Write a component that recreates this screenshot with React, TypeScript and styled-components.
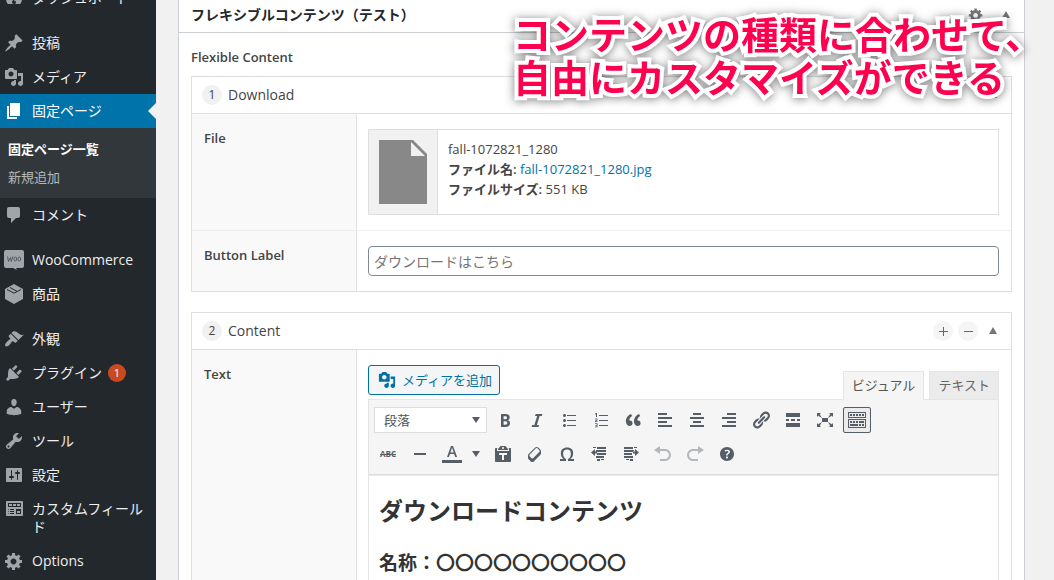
import React from "react";
import styled, { createGlobalStyle, css } from "styled-components";

const GlobalStyle = createGlobalStyle`
  *, *::before, *::after { box-sizing: border-box; }
  body {
    margin: 0;
    background: #f1f1f1;
    color: #444;
    font-family: "Open Sans", "Noto Sans CJK JP", sans-serif;
    font-size: 13px;
    line-height: 20px;
  }
  button, input, select { font: inherit; color: inherit; }
  a { color: #0073aa; text-decoration: none; }
  h1, h2, h3, ul, p { margin: 0; padding: 0; }
  ul { list-style: none; }
  strong { font-weight: 600; }
`;

/* ---------- icons ---------- */

const paths: Record<string, string> = {
  dashboard:
    "M3.760 16h12.480A7.980 7.980 0 0 0 18 11a8 8 0 1 0-16 0c0 1.900.66 3.640 1.760 5zM10 4c.55 0 1 .45 1 1s-.45 1-1 1-1-.45-1-1 .45-1 1-1zM9.500 9l.6 3.600c1 0 1.900.9 1.900 1.900s-.9 1.500-2 1.500-2-.7-2-1.700.6-1.500 1-1.700z",
  pin: "M10.44 3.02l1.82-1.82 6.36 6.35-1.83 1.82c-1.05-.68-2.48-.57-3.41.36l-.75.75c-.92.93-1.04 2.35-.35 3.41l-1.83 1.82-2.41-2.41-2.8 2.79c-.42.42-3.38 2.71-3.8 2.29s1.86-3.39 2.28-3.81l2.79-2.79L4.1 9.36l1.83-1.82c1.05.69 2.48.57 3.4-.36l.75-.75c.93-.92 1.05-2.35.36-3.41z",
  media:
    "M13 11V4c0-.55-.45-1-1-1h-1.67L9 1H5L3.67 3H2c-.55 0-1 .45-1 1v7c0 .55.45 1 1 1h10c.55 0 1-.45 1-1zM7 4.5c1.38 0 2.5 1.12 2.5 2.5S8.38 9.5 7 9.5 4.5 8.38 4.5 7 5.62 4.5 7 4.5zM14 6h5v10.5c0 1.38-1.12 2.5-2.5 2.5S14 17.88 14 16.5s1.12-2.5 2.5-2.5c.17 0 .34.02.5.05V9h-3V6zm-4 8.05V13h2v3.5c0 1.38-1.12 2.5-2.5 2.5S7 17.88 7 16.5 8.12 14 9.5 14c.17 0 .34.02.5.05z",
  page: "M6 15V2h10v13H6zm-1 1h8v2H3V5h2v11z",
  comment:
    "M5 2h9c1.1 0 2 .9 2 2v7c0 1.1-.9 2-2 2h-2l-5 5v-5H5c-1.1 0-2-.9-2-2V4c0-1.1.9-2 2-2z",
  brush:
    "M14.48 11.06L7.41 3.99l1.5-1.5c.5-.56 2.3-.47 3.51.32 1.21.8 1.43 1.28 2.91 2.1 1.18.64 2.45 1.26 4.45.85zm-.71.71L6.7 4.7 4.93 6.47c-.39.39-.39 1.02 0 1.41l1.06 1.06c.39.39.39 1.03 0 1.42-.6.6-1.43 1.11-2.21 1.69-.35.26-.7.53-1.01.84C1.43 14.23.4 16.08 1.4 17.07c.99 1 2.84-.03 4.18-1.36.31-.31.58-.66.85-1.02.57-.78 1.08-1.61 1.69-2.21.39-.39 1.02-.39 1.41 0l1.06 1.06c.39.39 1.02.39 1.41 0z",
  plug: "M13.11 4.36L9.87 7.6 8 5.73l3.24-3.24c.35-.34 1.05-.2 1.56.32.52.51.66 1.21.31 1.55zm-8 1.77l.91-1.12 9.01 9.01-1.19.84c-.71.71-2.63 1.16-3.82 1.16H6.14L4.9 17.26c-.59.59-1.54.59-2.12 0-.59-.58-.59-1.53 0-2.12l1.24-1.24v-3.88c0-1.13.4-3.19 1.09-3.89zm7.26 3.97l3.24-3.24c.34-.35 1.04-.21 1.55.31.52.51.66 1.21.31 1.55l-3.24 3.25z",
  user: "M10 9.25c-2.27 0-2.73-3.44-2.73-3.44C7 4.02 7.82 2 9.97 2c2.16 0 2.98 2.02 2.71 3.81 0 0-.41 3.44-2.68 3.44zm0 2.57L12.72 10c2.39 0 4.52 2.33 4.52 4.53v2.49s-3.65 1.13-7.24 1.13c-3.65 0-7.24-1.13-7.24-1.13v-2.49c0-2.25 1.94-4.48 4.47-4.48z",
  wrench:
    "M16.68 9.77c-1.34 1.34-3.3 1.67-4.95.99l-5.41 6.52c-.99.99-2.59.99-3.58 0s-.99-2.59 0-3.57l6.52-5.42c-.68-1.65-.35-3.61.99-4.95 1.28-1.28 3.12-1.62 4.72-1.06l-2.89 2.89 2.82 2.82 2.86-2.87c.53 1.58.18 3.39-1.08 4.65zM3.81 16.21c.4.39 1.04.39 1.43 0 .4-.4.4-1.04 0-1.43-.39-.4-1.03-.4-1.43 0-.39.39-.39 1.03 0 1.43z",
  sliders:
    "M18 16V4c0-.55-.45-1-1-1H3c-.55 0-1 .45-1 1v12c0 .55.45 1 1 1h14c.55 0 1-.45 1-1zM8 11h1c.55 0 1 .45 1 1s-.45 1-1 1H8v1.5c0 .28-.22.5-.5.5s-.5-.22-.5-.5V13H6c-.55 0-1-.45-1-1s.45-1 1-1h1V5.5c0-.28.22-.5.5-.5s.5.22.5.5V11zm5-2h-1c-.55 0-1-.45-1-1s.45-1 1-1h1V5.5c0-.28.22-.5.5-.5s.5.22.5.5V7h1c.55 0 1 .45 1 1s-.45 1-1 1h-1v5.5c0 .28-.22.5-.5.5s-.5-.22-.5-.5V9z",
  fields:
    "M19 16V3c0-.55-.45-1-1-1H3c-.55 0-1 .45-1 1v13c0 .55.45 1 1 1h15c.55 0 1-.45 1-1zM4 4h13v4H4V4zm1 1v2h3V5H5zm4 0v2h3V5H9zm4 0v2h3V5h-3zm-8.5 5c.28 0 .5.22.5.5s-.22.5-.5.5-.5-.22-.5-.5.22-.5.5-.5zM6 10h4v1H6v-1zm6 0h5v5h-5v-5zm-7.5 2c.28 0 .5.22.5.5s-.22.5-.5.5-.5-.22-.5-.5.22-.5.5-.5zM6 12h4v1H6v-1zm7 0v2h3v-2h-3zm-8.5 2c.28 0 .5.22.5.5s-.22.5-.5.5-.5-.22-.5-.5.22-.5.5-.5zM6 14h4v1H6v-1z",
  cog: "M18 12h-2.18c-.17.7-.44 1.35-.81 1.93l1.54 1.54-2.1 2.1-1.54-1.54c-.58.36-1.23.63-1.91.79V19H8v-2.18c-.68-.16-1.33-.43-1.91-.79l-1.54 1.54-2.12-2.12 1.54-1.54c-.36-.58-.63-1.23-.79-1.91H1V9.03h2.17c.16-.7.44-1.35.8-1.94L2.43 5.55l2.1-2.1 1.54 1.54c.58-.37 1.24-.64 1.93-.81V2h3v2.18c.68.16 1.33.43 1.91.79l1.54-1.54 2.12 2.12-1.54 1.54c.36.59.64 1.24.8 1.94H18V12zm-8.5 1.5c1.66 0 3-1.34 3-3s-1.34-3-3-3-3 1.34-3 3 1.34 3 3 3z",
  up: "M6 13l4-7 4 7z",
  down: "M6 7h8l-4 6z",
  bold: "M6 4v13h4.54c1.37 0 2.46-.33 3.26-1 .8-.66 1.2-1.58 1.2-2.77 0-.84-.17-1.51-.51-2.01s-.9-.85-1.67-1.03v-.09c.57-.1 1.02-.4 1.36-.9s.51-1.13.51-1.91c0-1.14-.39-1.98-1.17-2.5C12.75 4.26 11.5 4 9.78 4H6zm2.57 5.15V6.26h1.36c.73 0 1.27.11 1.61.32.34.22.51.58.51 1.07 0 .54-.16.92-.47 1.15s-.82.35-1.51.35h-1.5zm0 2.19h1.6c1.44 0 2.16.53 2.16 1.61 0 .6-.17 1.05-.51 1.34s-.86.43-1.57.43H8.57v-3.38z",
  italic: "M14.78 6h-2.13l-2.8 9h2.12l-.62 2H4.6l.62-2h2.14l2.8-9H8.03l.62-2h6.75z",
  ul: "M5.500 7C4.670 7 4 6.330 4 5.500 4 4.680 4.670 4 5.500 4 6.320 4 7 4.680 7 5.500 7 6.330 6.320 7 5.500 7zM8 5h9v1H8V5zm-2.500 7c-.83 0-1.500-.67-1.500-1.500C4 9.680 4.670 9 5.500 9c.82 0 1.500.68 1.500 1.500 0 .83-.68 1.500-1.500 1.500zM8 10h9v1H8v-1zm-2.500 7c-.83 0-1.500-.67-1.500-1.500 0-.82.67-1.500 1.500-1.500.82 0 1.500.68 1.500 1.500 0 .83-.68 1.500-1.500 1.500zM8 15h9v1H8v-1z",
  ol: "M8 5h9v1H8zM8 10h9v1H8zM8 15h9v1H8zM5 3h1v4H5V4.200l-1 .4v-.9zM4 8.500h2.400v2L5 11.200h1.500v.8H4v-1.200l1.600-.8v-.7H4zM4 13.300h2.500v4H4v-.8h1.700v-.8H4.400v-.8h1.300v-.8H4z",
  quote:
    "M9.49 13.22c0-.74-.2-1.38-.61-1.9-.62-.78-1.83-.88-2.53-.72-.29-1.65 1.11-3.75 2.92-4.65L7.88 4c-2.73 1.3-5.42 4.28-4.96 8.05C3.21 14.43 4.59 16 6.54 16c.85 0 1.56-.25 2.12-.75s.83-1.18.83-2.03zm8.05 0c0-.74-.2-1.38-.61-1.9-.63-.78-1.83-.88-2.53-.72-.29-1.65 1.11-3.75 2.92-4.65L15.93 4c-2.73 1.3-5.41 4.28-4.95 8.05.29 2.38 1.66 3.95 3.61 3.95.85 0 1.56-.25 2.12-.75s.83-1.18.83-2.03z",
  alignLeft: "M12 5V3H3v2h9zm5 4V7H3v2h14zm-5 4v-2H3v2h9zm5 4v-2H3v2h14z",
  alignCenter: "M14 5V3H6v2h8zm3 4V7H3v2h14zm-3 4v-2H6v2h8zm3 4v-2H3v2h14z",
  alignRight: "M17 5V3H8v2h9zm0 4V7H3v2h14zm0 4v-2H8v2h9zm0 4v-2H3v2h14z",
  link: "M17.74 2.76c1.68 1.69 1.68 4.41 0 6.1l-1.53 1.52c-1.12 1.12-2.7 1.47-4.14 1.09l2.62-2.61.76-.77.76-.76c.84-.84.84-2.2 0-3.04-.84-.85-2.2-.85-3.04 0l-.77.76-3.38 3.38c-.37-1.44-.02-3.02 1.1-4.14l1.52-1.53c1.69-1.68 4.42-1.68 6.1 0zM8.59 13.43l5.34-5.34c.42-.42.42-1.1 0-1.52-.44-.43-1.13-.39-1.53 0l-5.33 5.34c-.42.42-.42 1.1 0 1.52.44.43 1.13.39 1.52 0zm-.76 2.29l4.14-4.15c.38 1.44.03 3.02-1.09 4.14l-1.52 1.53c-1.69 1.68-4.41 1.68-6.1 0-1.68-1.68-1.68-4.42 0-6.1l1.53-1.52c1.12-1.12 2.7-1.47 4.14-1.1l-4.14 4.15c-.85.84-.85 2.2 0 3.05.84.84 2.2.84 3.04 0z",
  more: "M17 7V3H3v4h14zM6 11V9H3v2h3zm6 0V9H8v2h4zm5 0V9h-3v2h3zm0 6v-4H3v4h14z",
  expand:
    "M7 8h6v4H7zm-5 5v4h4l-1.200-1.200L7 12l-3.800 2.200M14 17h4v-4l-1.200 1.200L13 12l2.200 3.800M14 3l1.300 1.300L13 8l3.800-2.200L18 7V3M6 3H2v4l1.200-1.200L7 8 4.700 4.300",
  keyboard:
    "M19 2v6H1V2h18zm-1 5V3H2v4h16zM5 4v2H3V4h2zm3 0v2H6V4h2zm3 0v2H9V4h2zm3 0v2h-2V4h2zm3 0v2h-2V4h2zm2 5v9H1V9h18zm-1 8v-7H2v7h16zM5 11v2H3v-2h2zm3 0v2H6v-2h2zm3 0v2H9v-2h2zm6 0v2h-5v-2h5zm-6 3v2H3v-2h8zm3 0v2h-2v-2h2zm3 0v2h-2v-2h2z",
  rule: "M4 9h12v2H4z",
  paste:
    "M12.38 2L15 5v1H5V5l2.64-3h4.74zM10 5c.55 0 1-.44 1-1 0-.55-.45-1-1-1s-1 .45-1 1c0 .56.45 1 1 1zm5.45-1H17c.55 0 1 .45 1 1v12c0 .56-.45 1-1 1H3c-.55 0-1-.44-1-1V5c0-.55.45-1 1-1h1.55L4 4.63V7h12V4.63zM14 11V9H6v2h3v5h2v-5h3z",
  eraser:
    "M14.29 4.59l1.1 1.11c.41.4.61.94.61 1.47v2.12c0 .53-.2 1.07-.61 1.47l-6.63 6.63c-.4.41-.94.61-1.47.61s-1.07-.2-1.47-.61l-1.11-1.1-1.1-1.11c-.41-.4-.61-.94-.61-1.47v-2.12c0-.54.2-1.07.61-1.48l6.63-6.62c.4-.41.94-.61 1.47-.61s1.06.2 1.47.61zm-6.21 9.7l6.42-6.42c.39-.39.39-1.03 0-1.43L12.36 4.3c-.19-.19-.45-.29-.72-.29s-.52.1-.71.29l-6.42 6.42c-.39.4-.39 1.04 0 1.43l2.14 2.14c.38.38 1.04.38 1.43 0z",
  omega:
    "M10 5.4c1.27 0 2.24.36 2.91 1.08.66.71 1 1.76 1 3.13 0 1.28-.23 2.37-.69 3.27-.47.89-1.27 1.52-2.22 2.12v2h6v-2h-3.69c.92-.64 1.62-1.34 2.12-2.34.49-1.01.74-2.13.74-3.35 0-1.78-.55-3.19-1.65-4.22S11.92 3.54 10 3.54s-3.43.53-4.52 1.57c-1.1 1.04-1.65 2.44-1.65 4.2 0 1.21.24 2.31.73 3.33.48 1.01 1.19 1.71 2.1 2.36H3v2h6v-2c-.98-.64-1.8-1.28-2.24-2.17-.45-.89-.67-1.96-.67-3.22 0-1.37.33-2.41 1-3.13C7.750 5.760 8.720 5.400 10 5.400z",
  outdent:
    "M4 3h3v1H4zM8 3h9v2H8zM7 6h10v2H7zM8 9h9v2H8zM7 12h8v2H7zM8 15h3v2H8zM12 15h3v1h-3zM2 8.500L6 5v2.500h2v2H6V12z",
  indent:
    "M3 3h9v2H3zM13 3h3v1h-3zM3 6h10v2H3zM3 9h8v2H3zM3 12h9v2H3zM5 15h3v1H5zM9 15h3v2H9zM18 8.500L14 5v2.500h-2v2h2V12z",
  undo: "M12 5H7V2L1 6l6 4V7h5c2.200 0 4 1.800 4 4s-1.800 4-4 4H7v2h5c3.300 0 6-2.700 6-6s-2.700-6-6-6z",
  redo: "M8 5h5V2l6 4-6 4V7H8c-2.200 0-4 1.800-4 4s1.800 4 4 4h5v2H8c-3.300 0-6-2.700-6-6s2.700-6 6-6z",
  help: "M17 10c0-3.87-3.14-7-7-7-3.87 0-7 3.13-7 7s3.13 7 7 7c3.86 0 7-3.13 7-7zm-6.3 1.48H9.14v-.43c0-.38.08-.7.24-.98s.46-.57.88-.89c.41-.29.68-.53.81-.71.14-.18.2-.39.2-.62 0-.25-.09-.44-.28-.58-.19-.13-.45-.19-.79-.19-.58 0-1.25.19-2 .57l-.64-1.28c.87-.49 1.8-.74 2.77-.74.81 0 1.45.2 1.92.58.48.39.71.91.71 1.55 0 .43-.09.8-.29 1.11-.19.32-.57.67-1.11 1.06-.38.28-.61.49-.71.63-.1.15-.15.34-.15.57v.35zm-1.47 2.74c-.18-.17-.27-.42-.27-.73 0-.33.08-.58.26-.75s.43-.25.77-.25c.32 0 .57.09.75.26s.27.42.27.74c0 .3-.09.55-.27.72-.18.18-.43.27-.75.27-.33 0-.58-.09-.76-.26z",
};

const Svg = styled.svg`
  display: block;
  flex: none;
  fill: currentColor;
`;

function Icon({ name, size = 20 }: { name: string; size?: number }) {
  return (
    <Svg width={size} height={size} viewBox="0 0 20 20" aria-hidden="true">
      {name === "woo" ? (
        <>
          <path d="M2 0h16a2 2 0 0 1 2 2v14a2 2 0 0 1-2 2h-6l1 2-4-2H2a2 2 0 0 1-2-2V2a2 2 0 0 1 2-2z" />
          <path
            d="M3.500 6.500l1 5 2-4 .8 4 1.500-5"
            fill="none"
            stroke="#555b61"
            strokeWidth="1"
            strokeLinejoin="round"
          />
          <ellipse cx="11.300" cy="9" rx="1.400" ry="2" fill="none" stroke="#555b61" />
          <ellipse cx="15.300" cy="9" rx="1.400" ry="2" fill="none" stroke="#555b61" />
        </>
      ) : name === "box" ? (
        <>
          <path d="M10 0l9 5v10l-9 5-9-5V5z" />
          <path
            d="M3 5.500l7 3.700L17 5.500M6 3.500l7 3.900"
            fill="none"
            stroke="#23282d"
            strokeWidth="1"
          />
        </>
      ) : name === "color" ? (
        <>
          <path d="M13.230 13h1.900L11 2H9L5 13h1.880l1.070-3h4.180zm-1.530-4.540H8.510L10 3.600z" />
          <path d="M0 16h20v3H0z" />
        </>
      ) : (
        <path d={paths[name]} fillRule={name === "dashboard" ? "evenodd" : undefined} />
      )}
    </Svg>
  );
}

/* ---------- page frame ---------- */

const Shell = styled.div`
  display: flex;
  height: 100vh;
  overflow: hidden;
  position: relative;
`;

const Sidebar = styled.nav`
  flex: none;
  width: 156px;
  background: #23282d;
  overflow: hidden;
`;

const Menu = styled.ul`
  margin-top: -19px;
`;

const Separator = styled.li`
  height: 11px;
`;

const MenuLink = styled.a<{ $active?: boolean }>`
  display: flex;
  position: relative;
  gap: 8px;
  padding: 8px 8px 8px 4px;
  font-size: 14px;
  line-height: 18px;
  color: #eee;
  svg { margin: -1px 0; color: #a0a5aa; }
  ${(p) =>
    p.$active &&
    css`
      background: #0073aa;
      color: #fff;
      svg { color: #fff; }
      &::after {
        content: "";
        position: absolute;
        right: 0;
        top: 9px;
        border: 8px solid transparent;
        border-right-color: #f1f1f1;
        border-left-width: 0;
      }
    `}
`;

const MenuText = styled.span`
  display: flex;
  align-items: center;
  gap: 6px;
`;

const Count = styled.span`
  width: 18px;
  height: 18px;
  border-radius: 9px;
  background: #ca4a1f;
  color: #fff;
  font-size: 11px;
  text-align: center;
`;

const Submenu = styled.ul`
  padding: 7px 0;
  background: #32373c;
`;

const SubLink = styled.a<{ $current?: boolean }>`
  display: block;
  padding: 5px 8px;
  line-height: 18px;
  color: ${(p) => (p.$current ? "#fff" : "#b4b9be")};
  font-weight: ${(p) => (p.$current ? 700 : 400)};
`;

const Main = styled.main`
  flex: 1;
  min-width: 0;
  padding: 0 29px 0 22px;
`;

const Postbox = styled.section`
  min-height: 100%;
  background: #fff;
  border: solid #ccd0d4;
  border-width: 0 1px;
`;

const PostboxHeader = styled.header`
  display: flex;
  align-items: center;
  justify-content: space-between;
  height: 33px;
  padding: 0 8px 2px 12px;
  border-bottom: 1px solid #ccd0d4;
`;

const PostboxTitle = styled.h1`
  font-size: 14px;
  font-weight: 600;
  color: #23282d;
`;

const HeaderActions = styled.div`
  display: flex;
  align-items: center;
  gap: 12px;
`;

const PlainButton = styled.button`
  display: flex;
  padding: 0;
  border: 0;
  background: none;
  color: #72777c;
`;

const FieldGroup = styled.div`
  padding: 14px 12px;
`;

const GroupLabel = styled.h2`
  margin-bottom: 9px;
  font-size: 13px;
  line-height: 20px;
  font-weight: 600;
`;

const Layout = styled.section`
  margin-bottom: 20px;
  border: 1px solid #dfdfdf;
`;

const LayoutHeader = styled.header`
  display: flex;
  align-items: center;
  gap: 5px;
  height: 37px;
  padding: 0 8px 0 10px;
  border-bottom: 1px solid #dfdfdf;
`;

const Order = styled.span`
  width: 20px;
  height: 20px;
  border-radius: 10px;
  background: #f1f1f1;
  font-size: 12px;
  text-align: center;
`;

const LayoutName = styled.h3`
  flex: 1;
  margin-left: 1px;
  font-size: 14px;
  font-weight: 400;
`;

const RoundButton = styled.button`
  display: grid;
  place-items: center;
  width: 20px;
  height: 20px;
  padding: 0;
  border: 0;
  border-radius: 10px;
  background: #f5f5f5;
  color: #666;
`;

const FieldRow = styled.div`
  display: grid;
  grid-template-columns: 165px minmax(0, 1fr);
  & + & { border-top: 1px solid #eee; }
`;

const FieldLabel = styled.label`
  padding: 14px 12px;
  background: #f9f9f9;
  border-right: 1px solid #e1e1e1;
  font-weight: 600;
`;

const FieldBody = styled.div`
  min-width: 0;
  padding: 15px 12px 15px 11px;
`;

const FileCard = styled.div`
  display: flex;
  height: 86px;
  border: 1px solid #dfdfdf;
`;

const FileThumb = styled.div`
  display: grid;
  place-items: center;
  width: 69px;
  background: #f1f1f1;
  border-right: 1px solid #dfdfdf;
`;

const FileInfo = styled.div`
  padding: 9px 10px;
`;

const TextInput = styled.input`
  display: block;
  width: 100%;
  height: 30px;
  padding: 0 5px;
  border: 1px solid #7e8993;
  border-radius: 4px;
  background: #fff;
  font-size: 14px;
  &::placeholder { color: #757575; opacity: 1; }
`;

/* ---------- editor ---------- */

const EditorTop = styled.div`
  display: flex;
  justify-content: space-between;
  align-items: flex-start;
  height: 34px;
`;

const MediaButton = styled.button`
  display: flex;
  align-items: center;
  gap: 6px;
  height: 30px;
  padding: 0 7px 0 9px;
  border: 1px solid #0071a1;
  border-radius: 3px;
  background: #f3f5f6;
  color: #0071a1;
`;

const Tabs = styled.div`
  display: flex;
  gap: 5px;
  padding-top: 6px;
`;

const Tab = styled.button<{ $active?: boolean }>`
  height: ${(p) => (p.$active ? 29 : 28)}px;
  padding: 0 8px 2px;
  border: 1px solid #e5e5e5;
  border-bottom: 0;
  background: ${(p) => (p.$active ? "#f5f5f5" : "#ebebeb")};
  color: ${(p) => (p.$active ? "#555" : "#666")};
  position: relative;
  z-index: 1;
`;

const Editor = styled.div`
  border: 1px solid #e5e5e5;
`;

const Toolbar = styled.div`
  padding: 3px;
  background: #f5f5f5;
  border-bottom: 1px solid #ddd;
  box-shadow: 0 1px 1px rgba(0, 0, 0, 0.08);
`;

const ToolRow = styled.div`
  display: flex;
  align-items: center;
  gap: 4px;
  height: 34px;
  padding: 0 2px;
  color: #555d66;
`;

const SelectWrap = styled.div`
  display: flex;
  align-items: center;
  width: 113px;
  height: 26px;
  border: 1px solid #ddd;
  background: #fff;
  svg { margin-left: -20px; pointer-events: none; }
`;

const FormatSelect = styled.select`
  appearance: none;
  width: 100%;
  height: 24px;
  padding: 0 9px;
  border: 0;
  background: none;
  color: #555;
`;

const Tool = styled.button<{ $on?: boolean; $dim?: boolean }>`
  display: grid;
  place-items: center;
  flex: none;
  width: 28px;
  height: 26px;
  padding: 0;
  border: 1px solid ${(p) => (p.$on ? "#555d66" : "transparent")};
  border-radius: 2px;
  background: ${(p) => (p.$on ? "#ebebeb" : "none")};
  opacity: ${(p) => (p.$dim ? 0.4 : 1)};
`;

const SplitTool = styled.div`
  display: flex;
  align-items: center;
  width: 47px;
`;

const SplitArrow = styled(PlainButton)`
  color: inherit;
`;

const Strike = styled.span`
  font-size: 8px;
  font-weight: 700;
  line-height: 12px;
  text-decoration: line-through;
`;

const Document = styled.div`
  min-height: 180px;
  padding: 20px 10px;
  color: #333;
`;

const DocHeading = styled.h2`
  margin-bottom: 20px;
  font-size: 24px;
  line-height: 32px;
  font-weight: 700;
`;

const DocSubheading = styled.h3`
  font-size: 19px;
  line-height: 32px;
  font-weight: 700;
`;

const Caption = styled.p`
  position: absolute;
  top: 13px;
  right: 11px;
  font-size: 38px;
  line-height: 43px;
  font-weight: 700;
  white-space: nowrap;
  color: #ff004e;
  -webkit-text-stroke: 8px #fff;
  paint-order: stroke fill;
  stroke-linejoin: round;
  filter: drop-shadow(0 1px 5px rgba(0, 0, 0, 0.5));
`;

type Item = { icon: string; label: string; count?: number; active?: boolean; gap?: boolean };

const items: Item[] = [
  { icon: "dashboard", label: "ダッシュボード" },
  { icon: "pin", label: "投稿", gap: true },
  { icon: "media", label: "メディア" },
  { icon: "page", label: "固定ページ", active: true },
  { icon: "comment", label: "コメント" },
  { icon: "woo", label: "WooCommerce", gap: true },
  { icon: "box", label: "商品" },
  { icon: "brush", label: "外観", gap: true },
  { icon: "plug", label: "プラグイン", count: 1 },
  { icon: "user", label: "ユーザー" },
  { icon: "wrench", label: "ツール" },
  { icon: "sliders", label: "設定" },
  { icon: "fields", label: "カスタムフィールド" },
  { icon: "cog", label: "Options" },
];

const firstRow = [
  ["bold", "太字"],
  ["italic", "イタリック"],
  ["ul", "番号なしリスト"],
  ["ol", "番号付きリスト"],
  ["quote", "引用"],
  ["alignLeft", "左寄せ"],
  ["alignCenter", "中央揃え"],
  ["alignRight", "右寄せ"],
  ["link", "リンクの挿入"],
  ["more", "続きを読む"],
  ["expand", "集中執筆モード"],
  ["keyboard", "ツールバー切り替え"],
];

const secondRow = [
  ["paste", "テキストとしてペースト"],
  ["eraser", "書式設定をクリア"],
  ["omega", "特殊文字"],
  ["outdent", "インデントを減らす"],
  ["indent", "インデントを増やす"],
  ["undo", "取り消し"],
  ["redo", "やり直し"],
  ["help", "ショートカット"],
];

function AdminMenu() {
  return (
    <Sidebar>
      <Menu>
        {items.map((item) => (
          <React.Fragment key={item.label}>
            {item.gap && <Separator />}
            <li>
              <MenuLink href="#" $active={item.active}>
                <Icon name={item.icon} />
                <MenuText>
                  {item.label}
                  {item.count && <Count>{item.count}</Count>}
                </MenuText>
              </MenuLink>
              {item.active && (
                <Submenu>
                  <li><SubLink href="#" $current>固定ページ一覧</SubLink></li>
                  <li><SubLink href="#">新規追加</SubLink></li>
                </Submenu>
              )}
            </li>
          </React.Fragment>
        ))}
      </Menu>
    </Sidebar>
  );
}

function LayoutBar({ order, name, editable }: { order: number; name: string; editable?: boolean }) {
  return (
    <LayoutHeader>
      <Order>{order}</Order>
      <LayoutName>{name}</LayoutName>
      {editable && (
        <>
          <RoundButton aria-label="追加">
            <Svg width="9" height="9"><path d="M4 0h1v4h4v1H5v4H4V5H0V4h4z" /></Svg>
          </RoundButton>
          <RoundButton aria-label="削除">
            <Svg width="9" height="9"><path d="M0 4h9v1H0z" /></Svg>
          </RoundButton>
        </>
      )}
      <PlainButton aria-label="開閉"><Icon name="up" /></PlainButton>
    </LayoutHeader>
  );
}

function EditorToolbar() {
  return (
    <Toolbar>
      <ToolRow>
        <SelectWrap>
          <FormatSelect aria-label="書式" defaultValue="p">
            <option value="p">段落</option>
          </FormatSelect>
          <Icon name="down" />
        </SelectWrap>
        {firstRow.map(([icon, label]) => (
          <Tool key={icon} aria-label={label} $on={icon === "keyboard"}>
            <Icon name={icon} />
          </Tool>
        ))}
      </ToolRow>
      <ToolRow>
        <Tool aria-label="打ち消し"><Strike>ABC</Strike></Tool>
        <Tool aria-label="横ライン"><Icon name="rule" /></Tool>
        <SplitTool>
          <Tool aria-label="テキスト色"><Icon name="color" /></Tool>
          <SplitArrow aria-label="色を選択"><Icon name="down" /></SplitArrow>
        </SplitTool>
        {secondRow.map(([icon, label]) => (
          <Tool key={icon} aria-label={label} $dim={icon === "undo" || icon === "redo"}>
            <Icon name={icon} />
          </Tool>
        ))}
      </ToolRow>
    </Toolbar>
  );
}

export default function App() {
  return (
    <>
      <GlobalStyle />
      <Shell>
        <AdminMenu />
        <Main>
          <Postbox>
            <PostboxHeader>
              <PostboxTitle>フレキシブルコンテンツ（テスト）</PostboxTitle>
              <HeaderActions>
                <PlainButton aria-label="設定"><Icon name="cog" size={16} /></PlainButton>
                <PlainButton aria-label="開閉"><Icon name="up" /></PlainButton>
              </HeaderActions>
            </PostboxHeader>
            <FieldGroup>
              <GroupLabel>Flexible Content</GroupLabel>
              <Layout>
                <LayoutBar order={1} name="Download" />
                <FieldRow>
                  <FieldLabel as="div">File</FieldLabel>
                  <FieldBody>
                    <FileCard>
                      <FileThumb>
                        <Svg width="48" height="64" viewBox="0 0 48 64" color="#888">
                          <path d="M0 0h32v16h16v48H0z" />
                          <path d="M32 0h2l14 14v2h-2L32 2z" />
                        </Svg>
                      </FileThumb>
                      <FileInfo>
                        <p>fall-1072821_1280</p>
                        <p><strong>ファイル名:</strong> <a href="#">fall-1072821_1280.jpg</a></p>
                        <p><strong>ファイルサイズ:</strong> 551 KB</p>
                      </FileInfo>
                    </FileCard>
                  </FieldBody>
                </FieldRow>
                <FieldRow>
                  <FieldLabel htmlFor="button-label">Button Label</FieldLabel>
                  <FieldBody>
                    <TextInput id="button-label" placeholder="ダウンロードはこちら" />
                  </FieldBody>
                </FieldRow>
              </Layout>
              <Layout>
                <LayoutBar order={2} name="Content" editable />
                <FieldRow>
                  <FieldLabel as="div">Text</FieldLabel>
                  <FieldBody>
                    <EditorTop>
                      <MediaButton><Icon name="media" size={18} />メディアを追加</MediaButton>
                      <Tabs>
                        <Tab $active>ビジュアル</Tab>
                        <Tab>テキスト</Tab>
                      </Tabs>
                    </EditorTop>
                    <Editor>
                      <EditorToolbar />
                      <Document>
                        <DocHeading>ダウンロードコンテンツ</DocHeading>
                        <DocSubheading>名称：〇〇〇〇〇〇〇〇〇〇</DocSubheading>
                      </Document>
                    </Editor>
                  </FieldBody>
                </FieldRow>
              </Layout>
            </FieldGroup>
          </Postbox>
        </Main>
        <Caption>
          コンテンツの種類に合わせて、
          <br />
          自由にカスタマイズができる
        </Caption>
      </Shell>
    </>
  );
}
